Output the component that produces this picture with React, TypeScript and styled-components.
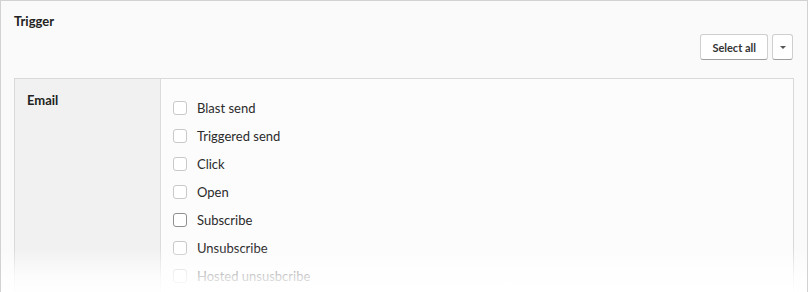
import styled, { createGlobalStyle } from "styled-components";

const GlobalStyle = createGlobalStyle`
  html, body {
    margin: 0;
    padding: 0;
    background: #ffffff;
    font-family: Lato, "Open Sans", Arial, sans-serif;
    color: #2b2b2b;
  }
`;

const Panel = styled.div`
  position: relative;
  height: 292px;
  overflow: hidden;
  box-sizing: border-box;
  border: 1px solid #d2d2d2;
  border-bottom: none;
  background: #fafafa;
  padding: 12px 13px 0 13px;
`;

const Title = styled.h3`
  margin: 0;
  font-size: 13px;
  font-weight: 700;
  line-height: 16px;
  color: #222;
`;

const Toolbar = styled.div`
  display: flex;
  justify-content: flex-end;
  gap: 4px;
  margin-top: 5px;
  margin-bottom: 18px;
  padding-right: 1px;
`;

const Button = styled.button<{ $narrow?: boolean }>`
  height: 26px;
  box-sizing: border-box;
  padding: ${(p) => (p.$narrow ? "0" : "0 11px")};
  width: ${(p) => (p.$narrow ? "21px" : "auto")};
  border: 1px solid #cfcfcf;
  border-bottom-color: #9e9e9e;
  border-radius: 3px;
  background: #ffffff;
  font-family: inherit;
  font-size: 11px;
  font-weight: 700;
  color: #333;
  display: flex;
  align-items: center;
  justify-content: center;
  cursor: pointer;
`;

const Caret = styled.span`
  width: 0;
  height: 0;
  border-left: 3px solid transparent;
  border-right: 3px solid transparent;
  border-top: 3px solid #555;
`;

const Table = styled.div`
  display: grid;
  grid-template-columns: 146px 1fr;
  border: 1px solid #d9d9d9;
  background: #fcfcfc;
  min-height: 260px;
`;

const Label = styled.div`
  background: #f0f1f0;
  border-right: 1px solid #dcdcdc;
  padding: 13px 12px;
  font-size: 13px;
  line-height: 16px;
  font-weight: 700;
  color: #222;
`;

const Options = styled.div`
  display: flex;
  flex-direction: column;
  gap: 12px;
  padding: 21px 12px;
`;

const Option = styled.label`
  display: flex;
  align-items: center;
  gap: 10px;
  font-size: 13px;
  line-height: 16px;
  color: #2b2b2b;
`;

const Box = styled.span<{ $dark?: boolean }>`
  width: 14px;
  height: 14px;
  box-sizing: border-box;
  border: 1px solid ${(p) => (p.$dark ? "#8f8f8f" : "#c9c9c9")};
  border-radius: 3px;
  background: #fff;
  flex: none;
`;

const Fade = styled.div`
  position: absolute;
  left: 0;
  right: 0;
  bottom: 0;
  height: 44px;
  background: linear-gradient(
    to bottom,
    rgba(255, 255, 255, 0) 0%,
    rgba(255, 255, 255, 0.45) 35%,
    rgba(255, 255, 255, 0.78) 65%,
    rgba(255, 255, 255, 0.96) 100%
  );
  pointer-events: none;
`;

const options = [
  "Blast send",
  "Triggered send",
  "Click",
  "Open",
  "Subscribe",
  "Unsubscribe",
  "Hosted unsusbcribe",
];

export default function App() {
  return (
    <>
      <GlobalStyle />
      <Panel>
        <Title>Trigger</Title>
        <Toolbar>
          <Button>Select all</Button>
          <Button $narrow>
            <Caret />
          </Button>
        </Toolbar>
        <Table>
          <Label>Email</Label>
          <Options>
            {options.map((o) => (
              <Option key={o}>
                <Box $dark={o === "Subscribe"} />
                {o}
              </Option>
            ))}
          </Options>
        </Table>
        <Fade />
      </Panel>
    </>
  );
}
